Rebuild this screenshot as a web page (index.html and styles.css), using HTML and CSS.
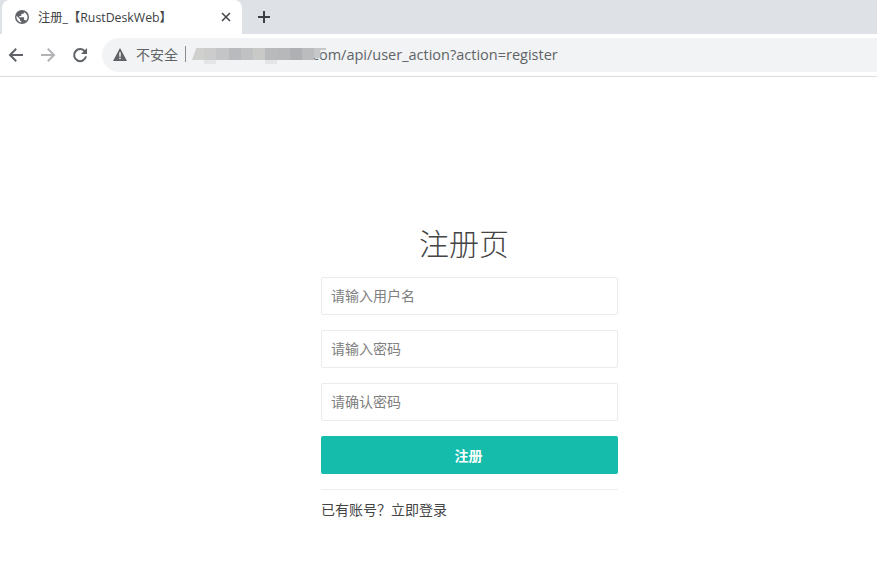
FILE: index.html
```html
<!DOCTYPE html>
<html lang="zh-CN">
<head>
<meta charset="utf-8">
<title>注册_【RustDeskWeb】</title>
<link rel="stylesheet" href="styles.css">
</head>
<body>
<header class="chrome">
  <div class="tabstrip">
    <div class="tab">
      <svg class="globe" width="14" height="14" viewBox="1 1 14 14"><circle cx="8" cy="8" r="7" fill="#5f6368"/><path d="M7.3 13.5C4.9 13.1 2.5 11 2.5 8c0-.4.1-.8.1-1.2L6 10.2v.7c0 .7.6 1.3 1.3 1.3zM12 11.8c-.2-.5-.7-.9-1.2-.9h-.7V8.9c0-.4-.3-.7-.7-.7H5.3V6.9h1.4c.4 0 .7-.3.7-.7V4.8h1.3c.7 0 1.4-.6 1.4-1.4v-.2c2 .8 3.4 2.7 3.4 4.8 0 1.5-.6 2.8-1.5 3.8z" fill="#fff"/></svg>
      <span class="tab-title">注册_【RustDeskWeb】</span>
      <svg class="tab-close" width="10" height="10" viewBox="0 0 10 10"><path d="M1 1l8 8M9 1L1 9" stroke="#45484d" stroke-width="1.6" fill="none"/></svg>
    </div>
    <svg class="new-tab" width="14" height="14" viewBox="0 0 14 14"><path d="M7 1v12M1 7h12" stroke="#3c4043" stroke-width="2" fill="none"/></svg>
  </div>
  <div class="toolbar">
    <svg class="nav-icon" width="16" height="16" viewBox="0 0 16 16"><path d="M15 8H2.5M8.2 1.8L2 8l6.2 6.2" stroke="#5f6368" stroke-width="2" fill="none"/></svg>
    <svg class="nav-icon" width="16" height="16" viewBox="0 0 16 16"><path d="M1 8h12.5M7.8 1.8L14 8l-6.2 6.2" stroke="#b1b3b6" stroke-width="2" fill="none"/></svg>
    <svg class="nav-icon" width="16" height="16" viewBox="0 0 16 16"><path d="M13 4.6A6 6 0 1 0 14 9.4" stroke="#5f6368" stroke-width="2" fill="none"/><path d="M15 1v6H9z" fill="#5f6368"/></svg>
    <div class="omnibox">
      <svg class="warn" width="14" height="13" viewBox="0 0 16 14" preserveAspectRatio="none"><path d="M8 0l8 14H0z" fill="#5f6368"/><rect x="7.2" y="4.6" width="1.6" height="4.8" fill="#fff"/><rect x="7.2" y="10.4" width="1.6" height="1.6" fill="#fff"/></svg>
      <span class="insecure">不安全</span>
      <span class="divider"></span>
      <span class="url">
        <span class="host">
          <i class="m1"></i><i class="m2"></i><i class="m3"></i><i class="m4"></i><i class="m5"></i><i class="m6"></i><i class="m7"></i><i class="m8"></i><i class="m9"></i><i class="m10"></i><i class="m11"></i>
        </span>
        <span class="path">com/api/user_action?action=register</span>
      </span>
    </div>
  </div>
</header>
<main class="page">
  <form class="form">
    <h1 class="heading">注册页</h1>
    <input class="field" type="text" placeholder="请输入用户名">
    <input class="field" type="password" placeholder="请输入密码">
    <input class="field" type="password" placeholder="请确认密码">
    <button class="submit" type="button">注册</button>
    <p class="login">已有账号？立即登录</p>
  </form>
</main>
</body>
</html>
```
FILE: styles.css
```css
* { box-sizing: border-box; }
html, body { margin: 0; padding: 0; }
body {
  width: 877px;
  height: 562px;
  overflow: hidden;
  background: #fff;
  font-family: "Open Sans", "Noto Sans CJK SC", sans-serif;
  color: #333;
}
.chrome { border-bottom: 1px solid #dadce0; }
.tabstrip {
  height: 34px;
  background: #dee1e6;
  display: flex;
  align-items: center;
  padding-left: 2px;
}
.tab {
  width: 240px;
  height: 34px;
  background: #fff;
  border-radius: 8px 8px 0 0;
  display: flex;
  align-items: center;
  padding: 0 11px 0 13px;
}
.globe { flex: none; }
.tab-title {
  flex: 1;
  margin-left: 9px;
  font-size: 12.3px;
  color: #3c4043;
  white-space: nowrap;
}
.tab-close { flex: none; }
.new-tab { margin-left: 15px; }
.toolbar {
  height: 42px;
  background: #fff;
  display: flex;
  align-items: center;
  padding-left: 8px;
}
.nav-icon { flex: none; margin-right: 16px; }
.nav-icon:nth-child(3) { margin-right: 14px; }
.omnibox {
  flex: 1;
  height: 34px;
  background: #f1f3f4;
  border-radius: 17px 0 0 17px;
  display: flex;
  align-items: center;
  padding: 0 0 2px 11px;
  white-space: nowrap;
}
.warn { flex: none; }
.insecure { margin-left: 9px; font-size: 14px; color: #5f6368; }
.divider { width: 1px; height: 16px; background: #8a8d91; margin: 0 6px 0 7px; }
.url { font-size: 14.5px; color: #5f6368; display: flex; align-items: center; }
.host { display: flex; flex: none; width: 134px; height: 12px; margin-right: -14px; position: relative; z-index: 1; }
.host i { display: block; flex: 1; position: relative; }
.m1 { background: #d0d1cf; clip-path: polygon(35% 0, 100% 0, 100% 100%, 0 100%); }
.m2 { background: #cbcccb; }
.m3 { background: #c4c5c6; }
.m4 { background: #b9babd; }
.m5 { background: #c0c1c2; }
.m6 { background: #c9cac8; }
.m7 { background: #b9babc; }
.m8 { background: #b7b8ba; }
.m9 { background: #afb0b4; }
.m10 { background: #bbbcbd; }
.m11 { background: #c6c7c8; clip-path: polygon(0 0, 100% 0, 100% 17%, 54% 17%, 54% 83%, 0 83%); }
.m2::after, .m7::after {
  content: "";
  position: absolute;
  left: 0;
  right: 0;
  top: 100%;
  height: 4px;
  background: #e4e5e6;
}
.page { padding: 145px 0 0 321px; }
.form { width: 297px; display: flex; flex-direction: column; }
.heading {
  margin: 0 0 15px;
  padding-right: 11px;
  height: 40px;
  line-height: 40px;
  font-size: 30px;
  font-weight: 300;
  text-align: center;
  color: #444;
  font-family: "Noto Sans CJK SC", sans-serif;
}
.field {
  height: 38px;
  margin-bottom: 15px;
  padding: 0 9px 2px;
  border: 1px solid #eaebec;
  border-radius: 2px;
  background: #fff;
  font-size: 14px;
  font-family: "Noto Sans CJK SC", sans-serif;
  outline: none;
}
.field::placeholder { color: #808080; opacity: 1; }
.submit {
  height: 38px;
  border: 0;
  border-radius: 2px;
  padding: 0 8px 0 6px;
  background: #16bcab;
  color: #fff;
  font-size: 14px;
  font-weight: 700;
  font-family: "Noto Sans CJK SC", sans-serif;
}
.login {
  margin: 15px 0 0;
  padding-top: 9px;
  border-top: 1px solid #eee;
  font-size: 14px;
  line-height: 20px;
  color: #444;
  font-family: "Noto Sans CJK SC", sans-serif;
}
```
